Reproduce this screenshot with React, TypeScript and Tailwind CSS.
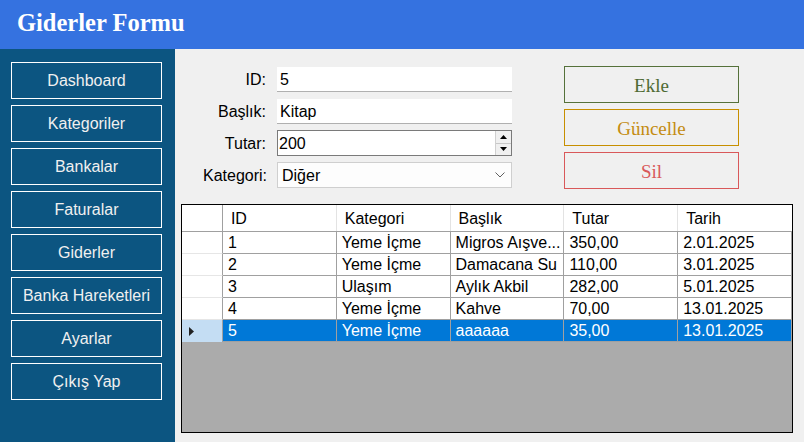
const menu = [
  'Dashboard',
  'Kategoriler',
  'Bankalar',
  'Faturalar',
  'Giderler',
  'Banka Hareketleri',
  'Ayarlar',
  'Çıkış Yap',
];

const cols = ['ID', 'Kategori', 'Başlık', 'Tutar', 'Tarih'];

const rows = [
  ['1', 'Yeme İçme', 'Migros Aışve...', '350,00', '2.01.2025'],
  ['2', 'Yeme İçme', 'Damacana Su', '110,00', '3.01.2025'],
  ['3', 'Ulaşım', 'Aylık Akbil', '282,00', '5.01.2025'],
  ['4', 'Yeme İçme', 'Kahve', '70,00', '13.01.2025'],
  ['5', 'Yeme İçme', 'aaaaaa', '35,00', '13.01.2025'],
];

const sans = { fontFamily: '"Liberation Sans", Arial, sans-serif' };
const serif = { fontFamily: '"Liberation Serif", "Times New Roman", serif' };

function Field({ label, children }: { label: string; children: React.ReactNode }) {
  return (
    <div className="flex items-center h-[26px]">
      <span className="w-[63px] text-right text-[16px] text-black pt-[2px]">{label}</span>
      <div className="ml-[11px] w-[235px]">{children}</div>
    </div>
  );
}

export default function App() {
  return (
    <div className="w-[804px] h-[442px] flex flex-col bg-[#f0f0f0] overflow-hidden" style={sans}>
      <div className="h-[49px] bg-[#3572e0] flex items-center px-[17px] shrink-0">
        <h1 className="text-white font-bold text-[24.5px] leading-none pb-[2px]" style={serif}>
          Giderler Formu
        </h1>
      </div>
      <div className="flex flex-1 min-h-0">
        <nav className="w-[175px] bg-[#0c5581] pt-[13px] pl-[11px] flex flex-col gap-[6px] shrink-0">
          {menu.map((m) => (
            <button
              key={m}
              className="w-[151px] h-[37px] border border-white text-[#f0f0f0] text-[16px] flex items-center justify-center pt-[1px]"
            >
              {m}
            </button>
          ))}
        </nav>
        <main className="flex-1 flex flex-col pt-[17px]">
          <div className="flex">
            <div className="pl-[28px] flex flex-col gap-[6px]">
              <Field label="ID:">
                <div className="h-[25px] bg-white border-b border-[#b0b0b0] flex items-center pl-[3px] pt-[2px] text-[16px]">
                  5
                </div>
              </Field>
              <Field label="Başlık:">
                <div className="h-[25px] bg-white border-b border-[#b0b0b0] flex items-center pl-[3px] pt-[2px] text-[16px]">
                  Kitap
                </div>
              </Field>
              <Field label="Tutar:">
                <div className="h-[26px] bg-white border border-[#7a7a7a] flex items-center text-[16px]">
                  <span className="flex-1 pl-[1px] pt-[2px]">200</span>
                  <div className="w-[16px] h-full flex flex-col border-l border-[#d0d0d0] bg-[#f0f0f0]">
                    <div className="flex-1 flex items-center justify-center border-b border-[#c8c8c8]">
                      <svg width="7" height="4" viewBox="0 0 7 4">
                        <path d="M3.5 0 L7 4 L0 4 Z" fill="#000" />
                      </svg>
                    </div>
                    <div className="flex-1 flex items-center justify-center">
                      <svg width="7" height="4" viewBox="0 0 7 4">
                        <path d="M0 0 L7 0 L3.5 4 Z" fill="#000" />
                      </svg>
                    </div>
                  </div>
                </div>
              </Field>
              <Field label="Kategori:">
                <div className="h-[26px] bg-[#fdfdfd] border border-[#cfcfcf] flex items-center text-[16px] pl-[4px] pr-[6px]">
                  <span className="flex-1 pt-[2px]">Diğer</span>
                  <svg width="10" height="6" viewBox="0 0 10 6">
                    <path d="M0.5 0.5 L5 5 L9.5 0.5" fill="none" stroke="#606060" strokeWidth="1" />
                  </svg>
                </div>
              </Field>
            </div>
            <div className="ml-[52px] flex flex-col gap-[6px]" style={serif}>
              <button className="w-[175px] h-[37px] border border-[#55713a] text-[#4f6a34] text-[19px] pt-[3px]">
                Ekle
              </button>
              <button className="w-[175px] h-[37px] border border-[#c78f00] text-[#c48c10] text-[19px] pt-[3px]">
                Güncelle
              </button>
              <button className="w-[175px] h-[37px] border border-[#d9585a] text-[#d9585a] text-[19px] pt-[3px]">
                Sil
              </button>
            </div>
          </div>
          <div className="ml-[6px] mt-[15px] w-[612px] h-[229px] border border-black bg-[#ababab] text-[16px] flex flex-col">
            <div className="flex h-[27px] bg-white border-b border-[#a0a0a0]">
              <div className="w-[41px] border-r border-[#a0a0a0]" />
              {cols.map((c, i) => (
                <div
                  key={c}
                  className={`w-[114px] flex items-center pl-[8px] pt-[2px] ${i < 4 ? 'border-r border-[#e3e3e3]' : ''}`}
                >
                  {c}
                </div>
              ))}
            </div>
            {rows.map((r, ri) => {
              const sel = ri === rows.length - 1;
              return (
                <div key={ri} className={`flex h-[22px] ${sel ? 'bg-[#0078d7] text-white' : 'bg-white text-black'}`}>
                  <div
                    className={`w-[41px] border-r border-[#a0a0a0] flex items-center pl-[7px] ${
                      sel ? 'bg-[#c4ddf3]' : 'bg-white border-b border-b-[#e6e6e6]'
                    }`}
                  >
                    {sel && (
                      <svg width="5" height="9" viewBox="0 0 5 9">
                        <path d="M0 0 L5 4.5 L0 9 Z" fill="#222" />
                      </svg>
                    )}
                  </div>
                  {r.map((v, ci) => (
                    <div
                      key={ci}
                      className="w-[114px] border-r border-b border-[#a0a0a0] flex items-center pl-[5px] pt-[1px] whitespace-nowrap overflow-hidden"
                    >
                      {v}
                    </div>
                  ))}
                </div>
              );
            })}
          </div>
        </main>
      </div>
    </div>
  );
}
